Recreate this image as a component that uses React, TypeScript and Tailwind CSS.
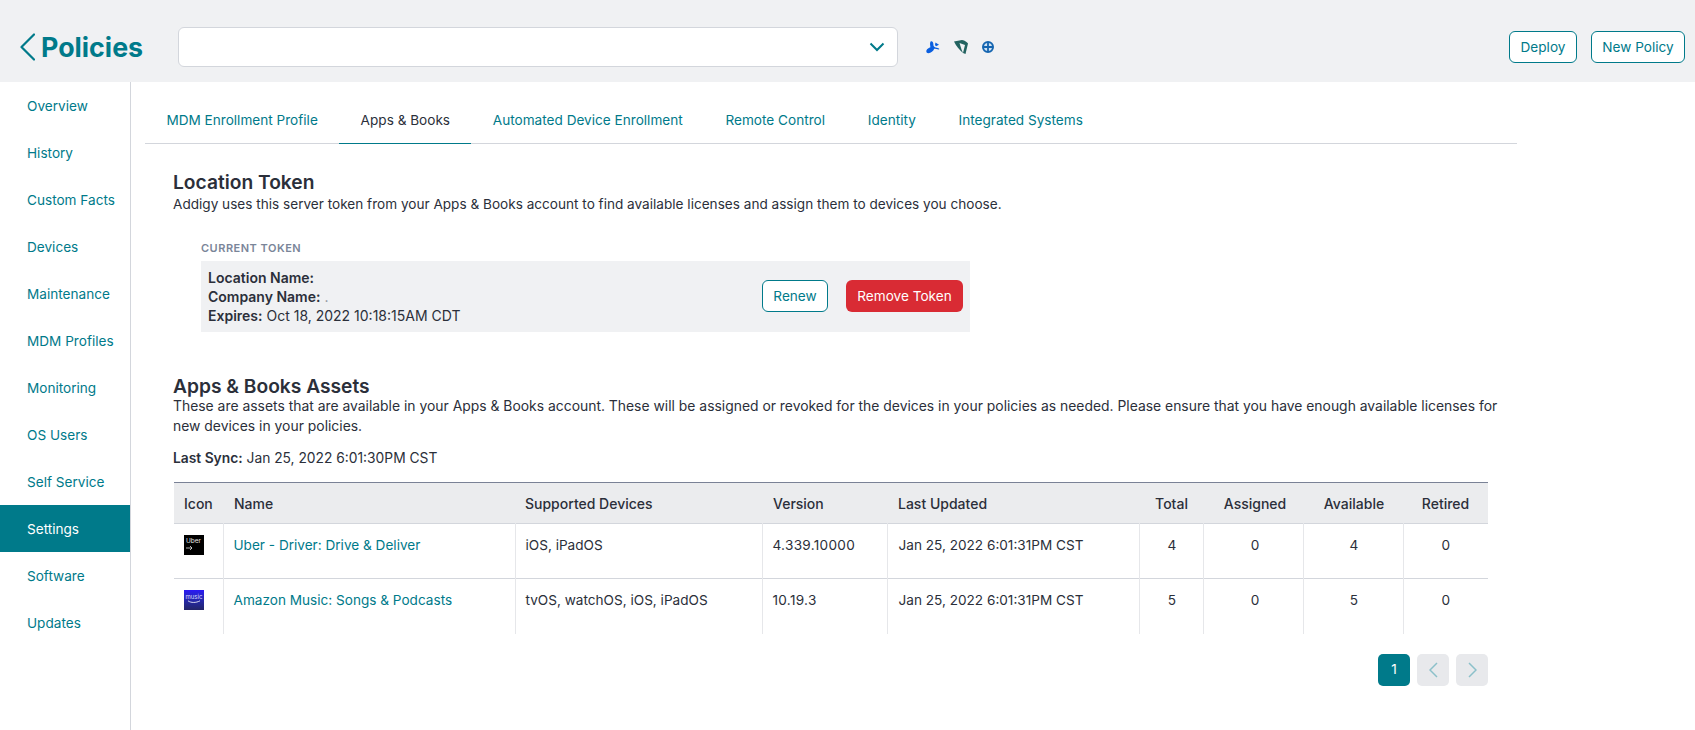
import React from "react";

const nav = ["Overview","History","Custom Facts","Devices","Maintenance","MDM Profiles","Monitoring","OS Users","Self Service","Settings","Software","Updates"];
const tabs = ["MDM Enrollment Profile","Apps & Books","Automated Device Enrollment","Remote Control","Identity","Integrated Systems"];

const rows = [
  { icon: "uber", name: "Uber - Driver: Drive & Deliver", dev: "iOS, iPadOS", ver: "4.339.10000", upd: "Jan 25, 2022 6:01:31PM CST", t: 4, a: 0, v: 4, r: 0 },
  { icon: "music", name: "Amazon Music: Songs & Podcasts", dev: "tvOS, watchOS, iOS, iPadOS", ver: "10.19.3", upd: "Jan 25, 2022 6:01:31PM CST", t: 5, a: 0, v: 5, r: 0 },
];

function UberIcon() {
  return (
    <div className="w-5 h-5 bg-black text-[#e8e8e8] flex flex-col pl-[2px] pt-[3px] leading-[7px] text-[6.5px]">
      <span>Uber</span>
      <svg width="7" height="6" viewBox="0 0 7 6" fill="none" stroke="#fff" strokeWidth="0.7"><path d="M0 3h6M4 1l2 2-2 2" /></svg>
    </div>
  );
}

function MusicIcon() {
  return (
    <div className="w-5 h-5 bg-gradient-to-b from-[#2a17f5] to-[#232468] text-[#d8d8ff] flex flex-col items-center pt-[4px] leading-[6px] text-[6px]">
      <span>music</span>
      <svg width="14" height="4" viewBox="0 0 14 4" fill="none" stroke="#fff" strokeWidth="0.8"><path d="M1 0.8c3 2.2 8 2.2 12 0" /></svg>
    </div>
  );
}

export default function App() {
  return (
    <div className="w-[1695px] h-[730px] overflow-hidden bg-white text-[13.6px] text-[#2b2f3a] font-['Inter',sans-serif]">
      <header className="h-[82px] bg-[#f0f1f3] flex items-center pt-[12px] pl-[20px] pr-[10px]">
        <svg width="15" height="28" viewBox="0 0 15 28" fill="none" stroke="#007a8a" strokeWidth="2.2" strokeLinecap="round" strokeLinejoin="round"><path d="M14 1.5 1.5 14 14 26.5" /></svg>
        <h1 className="ml-[6px] w-[137px] text-[26.8px] font-bold text-[#007a8a] leading-none">Policies</h1>
        <div className="w-[720px] h-10 bg-white border border-[#d3d6dc] rounded-[6px] flex items-center justify-end pr-[12px]">
          <svg width="16" height="10" viewBox="0 0 16 10" fill="none" stroke="#007a8a" strokeWidth="2"><path d="M1.5 1.5 8 8l6.5-6.5" /></svg>
        </div>
        <div className="ml-[28px] flex items-center gap-[13.5px]">
          <svg width="14" height="14" viewBox="0 0 14 14" fill="#0a5fe0"><path d="M2.5 13.2C.8 13.2 0 11.8.4 10.4 1 8.6 3 8 4.4 7.2 4.2 5.2 3.6 3.4 4.6 1.6 6 .4 7.6 2.6 7.4 4.6 7.3 6 8 7.2 9.6 7.4l2.4.6c1.4.4 1.6 1.4.8 1.4-1.6 0-3.4-.6-4.6-.6-.8 2.4-3.4 4.4-5.7 4.4Z" /><path d="M9.5 2.5 13 4.8 10 6.2 9 5Z" /></svg>
          <svg width="14" height="14" viewBox="0 0 14 14" fill="#22625f"><path d="M0 1.5 8 0c3 .5 5 2 6 3.5L11.5 14 9 13 11 5 5.5 3 7.5 9.5 9 13C5.5 10 2 6 0 1.5Z" /></svg>
          <svg width="14" height="14" viewBox="0 0 14 14" fill="none"><circle cx="7" cy="7" r="5" fill="#cfe2f3" stroke="#1565b0" strokeWidth="2" /><path d="M7 3v8M3 7h8" stroke="#1565b0" strokeWidth="1.8" /></svg>
        </div>
        <div className="ml-auto flex items-center gap-[14px]">
          <button className="h-8 w-[68px] bg-white border border-[#007a8a] rounded-[6px] text-[#007a8a]">Deploy</button>
          <button className="h-8 w-[94px] bg-white border border-[#007a8a] rounded-[6px] text-[#007a8a]">New Policy</button>
        </div>
      </header>
      <div className="flex h-[648px]">
        <nav className="w-[131px] shrink-0 border-r border-[#d3d6dc]">
          {nav.map((n) => (
            <div key={n} className={n === "Settings" ? "h-[47px] pt-px flex items-center pl-[27px] bg-[#007a8a] text-white" : "h-[47px] pt-px flex items-center pl-[27px] text-[#007a8a]"}>{n}</div>
          ))}
        </nav>
        <main className="pl-[14px] w-[1386px]">
          <div className="flex h-[62px] items-end border-b border-[#d3d6dc]">
            {tabs.map((t) => (
              <div key={t} className={t === "Apps & Books" ? "h-[43px] pb-[3px] px-[21.4px] flex items-center text-[#2b2f3a] border-b border-[#007a8a] -mb-px" : "h-[43px] pb-[3px] px-[21.4px] flex items-center text-[#007a8a]"}>{t}</div>
            ))}
          </div>
          <section className="pl-[28px] pt-[26px]">
            <h2 className="text-[19.2px] font-semibold leading-[25px]">Location Token</h2>
            <p className="leading-[18px]">Addigy uses this server token from your Apps &amp; Books account to find available licenses and assign them to devices you choose.</p>
            <div className="ml-[28px] mt-[27px] w-[769px]">
              <div className="text-[11px] font-semibold tracking-[0.5px] text-[#7a8599] leading-[16px] mb-[5px]">CURRENT TOKEN</div>
              <div className="h-[71px] bg-[#f0f1f3] flex items-center pl-[7px] pr-[7px]">
                <div className="leading-[19px] text-[14px]">
                  <div><b className="font-semibold">Location Name:</b></div>
                  <div><b className="font-semibold">Company Name:</b> <span className="text-[#8a8f99]">.</span></div>
                  <div><b className="font-semibold">Expires:</b> Oct 18, 2022 10:18:15AM CDT</div>
                </div>
                <div className="ml-auto flex gap-[18px] pb-[1px]">
                  <button className="h-8 w-[66px] bg-white border border-[#007a8a] rounded-[6px] text-[#007a8a]">Renew</button>
                  <button className="h-8 w-[117px] bg-[#d92b34] rounded-[6px] text-white">Remove Token</button>
                </div>
              </div>
            </div>
            <h2 className="mt-[44px] text-[19.2px] font-semibold leading-[20px]">Apps &amp; Books Assets</h2>
            <p className="leading-[20px] w-[1332px] text-[13.9px]">These are assets that are available in your Apps &amp; Books account. These will be assigned or revoked for the devices in your policies as needed. Please ensure that you have enough available licenses for new devices in your policies.</p>
            <p className="mt-[12px] leading-[20px] text-[13.8px]"><b className="font-semibold">Last Sync:</b> Jan 25, 2022 6:01:30PM CST</p>
            <table className="mt-[14px] ml-px w-[1314px] table-fixed border-collapse">
              <thead>
                <tr className="h-[41px] bg-[#ebecee] border-t border-[#7a8296] border-b-[#d3d6dc] border-b text-[14px]">
                  <th className="w-[49px] font-medium text-left pl-[10px]">Icon</th>
                  <th className="w-[292px] font-medium text-left pl-[11px]">Name</th>
                  <th className="w-[247px] font-medium text-left pl-[10px]">Supported Devices</th>
                  <th className="w-[125px] font-medium text-left pl-[11px]">Version</th>
                  <th className="w-[252px] font-medium text-left pl-[11px]">Last Updated</th>
                  <th className="w-[64px] font-medium text-center pl-[1px]">Total</th>
                  <th className="w-[100px] font-medium text-center pl-[4px]">Assigned</th>
                  <th className="w-[100px] font-medium text-center pl-[2px]">Available</th>
                  <th className="font-medium text-center">Retired</th>
                </tr>
              </thead>
              <tbody>
                {rows.map((r) => (
                  <tr key={r.name} className="h-[55px] border-b border-[#d3d6dc] last:border-b-0 align-top">
                    <td className="pl-[10px] pt-[11px] border-r border-[#e6e7ea]">{r.icon === "uber" ? <UberIcon /> : <MusicIcon />}</td>
                    <td className="pl-[10px] pt-[11px] leading-[20px] border-r border-[#e6e7ea] text-[#007a8a]">{r.name}</td>
                    <td className="pl-[10px] pt-[11px] leading-[20px] border-r border-[#e6e7ea]">{r.dev}</td>
                    <td className="pl-[10px] pt-[11px] leading-[20px] border-r border-[#e6e7ea] tracking-[0.3px]">{r.ver}</td>
                    <td className="pl-[11px] pt-[11px] leading-[20px] border-r border-[#e6e7ea]">{r.upd}</td>
                    <td className="pl-[2px] pt-[11px] leading-[20px] text-center border-r border-[#e6e7ea]">{r.t}</td>
                    <td className="pl-[4px] pt-[11px] leading-[20px] text-center border-r border-[#e6e7ea]">{r.a}</td>
                    <td className="pl-[2px] pt-[11px] leading-[20px] text-center border-r border-[#e6e7ea]">{r.v}</td>
                    <td className="pt-[11px] leading-[20px] text-center">{r.r}</td>
                  </tr>
                ))}
              </tbody>
            </table>
            <div className="mt-[20px] w-[1315px] flex justify-end gap-[7px]">
              <div className="w-8 h-8 rounded-[5px] bg-[#007a8a] text-white flex items-center justify-center">1</div>
              <div className="w-8 h-8 rounded-[5px] bg-[#e8e9ec] flex items-center justify-center">
                <svg width="9" height="16" viewBox="0 0 9 16" fill="none" stroke="#8cc0ca" strokeWidth="1.5"><path d="M8 1 1 8l7 7" /></svg>
              </div>
              <div className="w-8 h-8 rounded-[5px] bg-[#e8e9ec] flex items-center justify-center">
                <svg width="9" height="16" viewBox="0 0 9 16" fill="none" stroke="#8cc0ca" strokeWidth="1.5"><path d="m1 1 7 7-7 7" /></svg>
              </div>
            </div>
          </section>
        </main>
      </div>
    </div>
  );
}
